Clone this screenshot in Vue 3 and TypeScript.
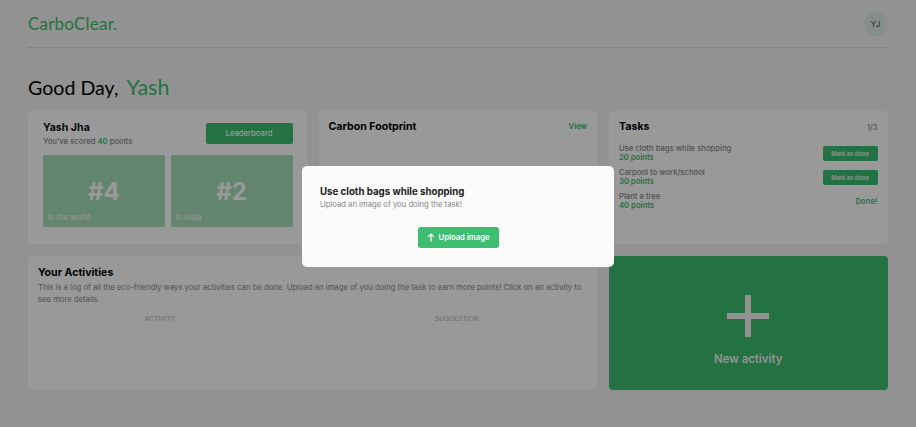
<script setup lang="ts">
interface Task { name: string; points: number; done: boolean }
const tasks: Task[] = [
  { name: 'Use cloth bags while shopping', points: 20, done: false },
  { name: 'Carpool to work/school', points: 30, done: false },
  { name: 'Plant a tree', points: 40, done: true },
]
</script>

<template>
  <div class="page">
    <header class="topbar">
      <div class="logo">CarboClear.</div>
      <div class="avatar">YJ</div>
    </header>
    <h1 class="greet">Good Day, <span class="green">Yash</span></h1>
    <main class="grid">
      <section class="card profile">
        <div class="profile-head">
          <div>
            <div class="name">Yash Jha</div>
            <div class="score">You've scored <b class="green">40</b> points</div>
          </div>
          <button class="btn leader">Leaderboard</button>
        </div>
        <div class="ranks">
          <div class="rank"><div class="rank-num">#4</div><div class="rank-lab">in the world</div></div>
          <div class="rank"><div class="rank-num">#2</div><div class="rank-lab">in India</div></div>
        </div>
      </section>
      <section class="card footprint">
        <h2>Carbon Footprint</h2>
        <a class="view">View</a>
      </section>
      <section class="card tasks">
        <div class="tasks-head"><h2>Tasks</h2><span class="count">1/3</span></div>
        <div v-for="t in tasks" :key="t.name" class="task">
          <div>
            <div class="task-name">{{ t.name }}</div>
            <div class="task-pts">{{ t.points }} points</div>
          </div>
          <span v-if="t.done" class="done">Done!</span>
          <button v-else class="btn mark">Mark as done</button>
        </div>
      </section>
      <section class="card activities">
        <h2>Your Activities</h2>
        <p>This is a log of all the eco-friendly ways your activities can be done. Upload an image of you doing the task to earn more points! Click on an activity to see more details.</p>
        <div class="cols"><span>ACTIVITY</span><span>SUGGESTION</span></div>
      </section>
      <section class="new">
        <svg width="42" height="42" viewBox="0 0 42 42" aria-hidden="true"><path d="M18 0h6v18h18v6H24v18h-6V24H0v-6h18z" fill="#f4f4f4" /></svg>
        <div class="new-label">New activity</div>
      </section>
    </main>
    <div class="overlay">
      <div class="modal">
        <div class="modal-title">Use cloth bags while shopping</div>
        <div class="modal-sub">Upload an image of you doing the task!</div>
        <div class="modal-action">
          <button class="upload">
            <svg width="8" height="9" viewBox="0 0 8 9" aria-hidden="true"><path d="M4 8.5V1M1 4 4 1 7 4" fill="none" stroke="#fff" stroke-width="1.2" /></svg>
            Upload image
          </button>
        </div>
      </div>
    </div>
  </div>
</template>

<style>
html, body { background: #f4f4f4; }
</style>

<style scoped>
.page { height: 427px; padding: 0 28.5px 0 28px; box-sizing: border-box; font-family: Inter, sans-serif; overflow: hidden; color: #111; }
.green { color: #3cbd70; }
.topbar { height: 47px; display: flex; align-items: center; justify-content: space-between; border-bottom: 1px solid #dcdcdc; box-sizing: content-box; }
.logo { font-family: Lato, sans-serif; font-weight: 400; font-size: 17px; color: #3cbd70; letter-spacing: 0.2px; }
.avatar { width: 24px; height: 24px; border-radius: 50%; background: #deeee4; display: flex; align-items: center; justify-content: center; font-size: 8px; color: #444; }
.greet { margin: 24px 0 0; height: 39px; font-family: Lato, sans-serif; font-weight: 400; font-size: 19.6px; line-height: 30px; color: #000; }
.greet .green { font-size: 21.5px; margin-left: 3px; }
.grid { display: grid; grid-template-columns: repeat(3, 1fr); grid-template-rows: 133px 134px; gap: 12px; }
.card { background: #fff; border-radius: 4px; box-sizing: border-box; }
h2 { margin: 0; font-size: 10.6px; font-weight: 700; color: #000; line-height: 14px; }
.profile { padding: 10px 14px 0 15px; }
.profile-head { display: flex; justify-content: space-between; align-items: flex-start; height: 34px; }
.name { font-size: 10.6px; font-weight: 700; line-height: 14px; }
.score { font-size: 7.68px; line-height: 13px; color: #888; font-weight: 500; }
.score b { font-weight: 600; }
.btn { border: 0; border-radius: 2px; background: #3cbd70; color: #fff; font-family: inherit; padding: 0; }
.leader { width: 87px; height: 21px; margin-top: 2px; font-size: 7.68px; font-weight: 500; }
.ranks { display: grid; grid-template-columns: 1fr 1fr; gap: 6px; }
.rank { height: 72px; border-radius: 2px; background: #a5dcba; color: #fff; display: flex; flex-direction: column; align-items: center; }
.rank-num { font-size: 24px; font-weight: 700; line-height: 24px; margin-top: 25px; }
.rank-lab { align-self: flex-start; font-size: 7.68px; line-height: 10px; margin: 9px 0 0 5px; font-weight: 400; }
.footprint { padding: 9px 10px; display: flex; justify-content: space-between; align-items: flex-start; }
.view { font-size: 7.68px; font-weight: 600; color: #3cbd70; line-height: 14px; }
.tasks { padding: 9px 10px; }
.tasks-head { display: flex; justify-content: space-between; align-items: center; margin-bottom: 7px; }
.count { font-size: 7.68px; color: #777; }
.task { display: flex; justify-content: space-between; align-items: center; height: 24px; font-size: 7.68px; }
.task-name { color: #888; line-height: 9px; font-weight: 500; }
.task-pts { color: #3cbd70; line-height: 9px; font-weight: 600; }
.mark { width: 55px; height: 15px; font-size: 5.8px; font-weight: 500; }
.done { color: #3cbd70; font-size: 7.68px; font-weight: 600; }
.activities { grid-column: span 2; padding: 10px; }
.activities p { margin: 2px 0 0; font-size: 7.68px; line-height: 12px; color: #888; font-weight: 400; }
.cols { display: grid; grid-template-columns: 244px 260px; column-gap: 45px; margin-top: 7px; text-align: center; font-size: 6.7px; color: #b0b0b0; line-height: 12px; }
.new { background: #3cbd70; border-radius: 4px; display: flex; flex-direction: column; align-items: center; padding-top: 39px; box-sizing: border-box; }
.new-label { color: #f4f4f4; font-size: 11.4px; font-weight: 600; margin-top: 15px; }
.overlay { position: fixed; inset: 0; background: rgba(0, 0, 0, 0.4); display: flex; align-items: flex-start; justify-content: center; }
.modal { width: 312px; height: 101px; margin-top: 166px; padding: 18px; box-sizing: border-box; background: #fafafa; border-radius: 5px; }
.modal-title { font-size: 9.7px; font-weight: 700; color: #222; line-height: 14px; margin-top: 1px; }
.modal-sub { font-size: 7.68px; color: #888; line-height: 12px; }
.modal-action { display: flex; justify-content: center; margin-top: 16px; }
.upload { width: 81px; height: 21px; border: 0; border-radius: 3px; background: #3cbd70; color: #fff; font-family: inherit; font-size: 7.68px; font-weight: 600; display: flex; align-items: center; justify-content: center; gap: 4px; padding: 0; }
</style>
